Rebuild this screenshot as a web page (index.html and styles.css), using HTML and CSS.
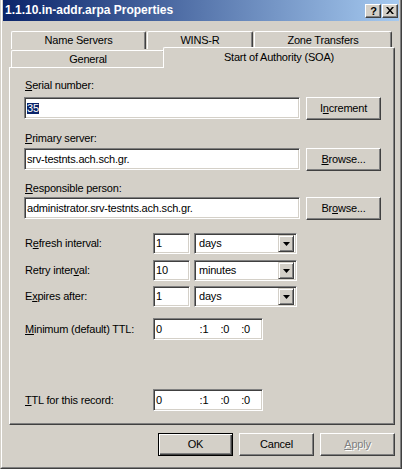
FILE: index.html
```html
<!DOCTYPE html>
<html>
<head>
<meta charset="utf-8">
<link rel="stylesheet" href="styles.css">
</head>
<body>
<div class="window">
  <div class="frame">
    <div class="titlebar">
      <span class="title">1.1.10.in-addr.arpa Properties</span>
      <div class="tbtns">
        <span class="tbtn help">?</span>
        <span class="tbtn close"><svg width="8" height="7" viewBox="0 0 8 7"><path d="M0 0h2l2 2.5L6 0h2L5 3.5 8 7H6L4 4.5 2 7H0l3-3.5z" fill="#000"/></svg></span>
      </div>
    </div>
    <div class="client">
      <div class="tabs">
        <div class="tabrow back">
          <div class="tab t-ns">Name Servers</div>
          <div class="tab t-wins">WINS-R</div>
          <div class="tab t-zone">Zone Transfers</div>
        </div>
        <div class="tabrow front">
          <div class="tab t-gen">General</div>
          <div class="tab t-soa">Start of Authority (SOA)</div>
        </div>
      </div>
      <div class="panel">
        <div class="label l-serial"><u>S</u>erial number:</div>
        <div class="line">
          <div class="edit wide"><span class="sel">35</span></div>
          <div class="btn side">I<u>n</u>crement</div>
        </div>
        <div class="label l-primary"><u>P</u>rimary server:</div>
        <div class="line">
          <div class="edit wide">srv-testnts.ach.sch.gr.</div>
          <div class="btn side"><u>B</u>rowse...</div>
        </div>
        <div class="label l-resp"><u>R</u>esponsible person:</div>
        <div class="line">
          <div class="edit wide">administrator.srv-testnts.ach.sch.gr.</div>
          <div class="btn side">Br<u>o</u>wse...</div>
        </div>
        <div class="irow r-refresh">
          <div class="ilabel">R<u>e</u>fresh interval:</div>
          <div class="edit num">1</div>
          <div class="combo"><span class="ctext">days</span><span class="carrow"><svg width="7" height="4" viewBox="0 0 7 4"><path d="M0 0h7L3.5 4z" fill="#000"/></svg></span></div>
        </div>
        <div class="irow r-retry">
          <div class="ilabel">Retry inter<u>v</u>al:</div>
          <div class="edit num">10</div>
          <div class="combo"><span class="ctext">minutes</span><span class="carrow"><svg width="7" height="4" viewBox="0 0 7 4"><path d="M0 0h7L3.5 4z" fill="#000"/></svg></span></div>
        </div>
        <div class="irow r-expires">
          <div class="ilabel">E<u>x</u>pires after:</div>
          <div class="edit num">1</div>
          <div class="combo"><span class="ctext">days</span><span class="carrow"><svg width="7" height="4" viewBox="0 0 7 4"><path d="M0 0h7L3.5 4z" fill="#000"/></svg></span></div>
        </div>
        <div class="irow r-min">
          <div class="ilabel"><u>M</u>inimum (default) TTL:</div>
          <div class="edit ttl"><span class="s0">0</span><span class="s1">:1</span><span class="s1">:0</span><span class="s1">:0</span></div>
        </div>
        <div class="irow r-ttl">
          <div class="ilabel"><u>T</u>TL for this record:</div>
          <div class="edit ttl"><span class="s0">0</span><span class="s1">:1</span><span class="s1">:0</span><span class="s1">:0</span></div>
        </div>
      </div>
      <div class="buttons">
        <div class="btn dlg default">OK</div>
        <div class="btn dlg">Cancel</div>
        <div class="btn dlg disabled"><u>A</u>pply</div>
      </div>
    </div>
  </div>
</div>
</body>
</html>
```
FILE: styles.css
```css
* { box-sizing: border-box; }
html, body { margin: 0; padding: 0; }
body {
  width: 402px;
  height: 469px;
  overflow: hidden;
  background: #d4d0c8;
  font-family: "Liberation Sans", Arial, sans-serif;
  font-size: 11px;
  line-height: 13px;
  letter-spacing: -0.2px;
  color: #000;
}
u { text-decoration: underline; text-underline-offset: 1px; }

.window {
  width: 402px;
  height: 469px;
  background: #d4d0c8;
  border: 1px solid;
  border-top: 0;
  border-color: #d4d0c8 #404040 #404040 #d4d0c8;
}
.frame {
  height: 100%;
  border: 1px solid;
  border-top: 0;
  border-color: #fff #808080 #808080 #fff;
  padding: 0 1px 2px 1px;
  display: flex;
  flex-direction: column;
}

.titlebar {
  height: 21px;
  flex: none;
  background: linear-gradient(to right, #0a246a, #a6caf0);
  display: flex;
  align-items: center;
  justify-content: space-between;
  padding: 0 1px 0 2px;
}
.title {
  color: #fff;
  font-weight: bold;
  font-size: 12px;
  letter-spacing: 0;
}
.tbtns { display: flex; gap: 1px; }
.tbtn {
  width: 16px;
  height: 14px;
  background: #d4d0c8;
  border: 1px solid;
  border-color: #fff #404040 #404040 #fff;
  box-shadow: inset -1px -1px #808080;
  display: flex;
  align-items: center;
  justify-content: center;
  font-weight: bold;
  font-size: 11px;
  line-height: 12px;
  letter-spacing: 0;
}
.tbtn.help { padding-left: 1px; }

.client {
  flex: 1;
  display: flex;
  flex-direction: column;
  padding: 10px 4px 0 6px;
}

.tabs { height: 36px; flex: none; }
.tabrow { display: flex; height: 18px; }
.tabrow.back { padding-left: 2px; }
.tabrow.front { padding-left: 2px; align-items: flex-start; }
.tab {
  height: 18px;
  border-top: 1px solid #fff;
  border-left: 1px solid #fff;
  border-right: 1px solid #404040;
  border-top-left-radius: 2px;
  border-top-right-radius: 2px;
  box-shadow: inset -1px 0 #808080;
  text-align: center;
  padding-top: 2px;
  background: #d4d0c8;
}
.t-ns { width: 135px; margin-right: 1px; }
.t-wins { width: 106px; margin-right: 1px; }
.t-zone { width: 138px; }
.t-gen { width: 154px; height: 17px; margin-top: 1px; padding-top: 2px; }
.t-soa {
  width: 232px;
  height: 21px;
  margin-top: -2px;
  margin-left: -2px;
  padding-top: 3px;
  position: relative;
  z-index: 2;
}

.panel {
  height: 358px;
  flex: none;
  border: 1px solid;
  border-color: #fff #404040 #404040 #fff;
  box-shadow: inset -1px -1px #808080;
  padding: 11px 0 0 14px;
}
.label { margin-left: 1px; height: 13px; }
.l-primary { margin-top: 12px; }
.l-resp { margin-top: 11px; }
.line { display: flex; margin-top: 5px; height: 23px; }
.l-primary + .line { margin-top: 3px; }
.l-resp + .line { margin-top: 2px; }

.edit {
  height: 22px;
  background: #fff;
  border: 1px solid;
  border-color: #808080 #fff #fff #808080;
  box-shadow: inset 1px 1px #404040, inset -1px -1px #d4d0c8;
  padding-left: 2px;
  display: flex;
  align-items: center;
  white-space: nowrap;
}
.edit.wide { width: 276px; }
.sel { background: #0a246a; color: #fff; line-height: 11px; }

.btn {
  height: 23px;
  border: 1px solid;
  border-color: #fff #404040 #404040 #fff;
  box-shadow: inset -1px -1px #808080;
  display: flex;
  align-items: center;
  justify-content: center;
  background: #d4d0c8;
}
.btn.side { width: 75px; margin-left: 6px; }

.irow { display: flex; align-items: center; height: 21px; }
.r-refresh { margin-top: 13px; }
.r-retry { margin-top: 6px; }
.r-expires { margin-top: 5px; }
.r-min { margin-top: 11px; height: 22px; }
.r-ttl { margin-top: 49px; height: 22px; }
.ilabel { width: 129px; padding-left: 1px; }
.edit.num { width: 37px; height: 21px; margin-right: 4px; }
.edit.ttl { width: 110px; height: 22px; }
.s0 { width: 44px; }
.s1 { width: 21px; }

.combo {
  width: 103px;
  height: 21px;
  background: #fff;
  border: 1px solid;
  border-color: #808080 #fff #fff #808080;
  box-shadow: inset 1px 1px #404040, inset -1px -1px #d4d0c8;
  padding: 2px 2px 2px 4px;
  display: flex;
  align-items: center;
  justify-content: space-between;
}
.carrow {
  width: 16px;
  height: 17px;
  background: #d4d0c8;
  border: 1px solid;
  border-color: #d4d0c8 #404040 #404040 #d4d0c8;
  box-shadow: inset 1px 1px #fff, inset -1px -1px #808080;
  display: flex;
  align-items: center;
  justify-content: center;
}
.carrow svg { display: block; }

.buttons {
  display: flex;
  justify-content: flex-end;
  gap: 6px;
  margin-top: 8px;
}
.btn.dlg { width: 75px; }
.btn.default {
  border-color: #000;
  box-shadow: inset 1px 1px #fff, inset -1px -1px #404040, inset -2px -2px #808080;
}
.btn.disabled { color: #808080; text-shadow: 1px 1px #fff; }
```
